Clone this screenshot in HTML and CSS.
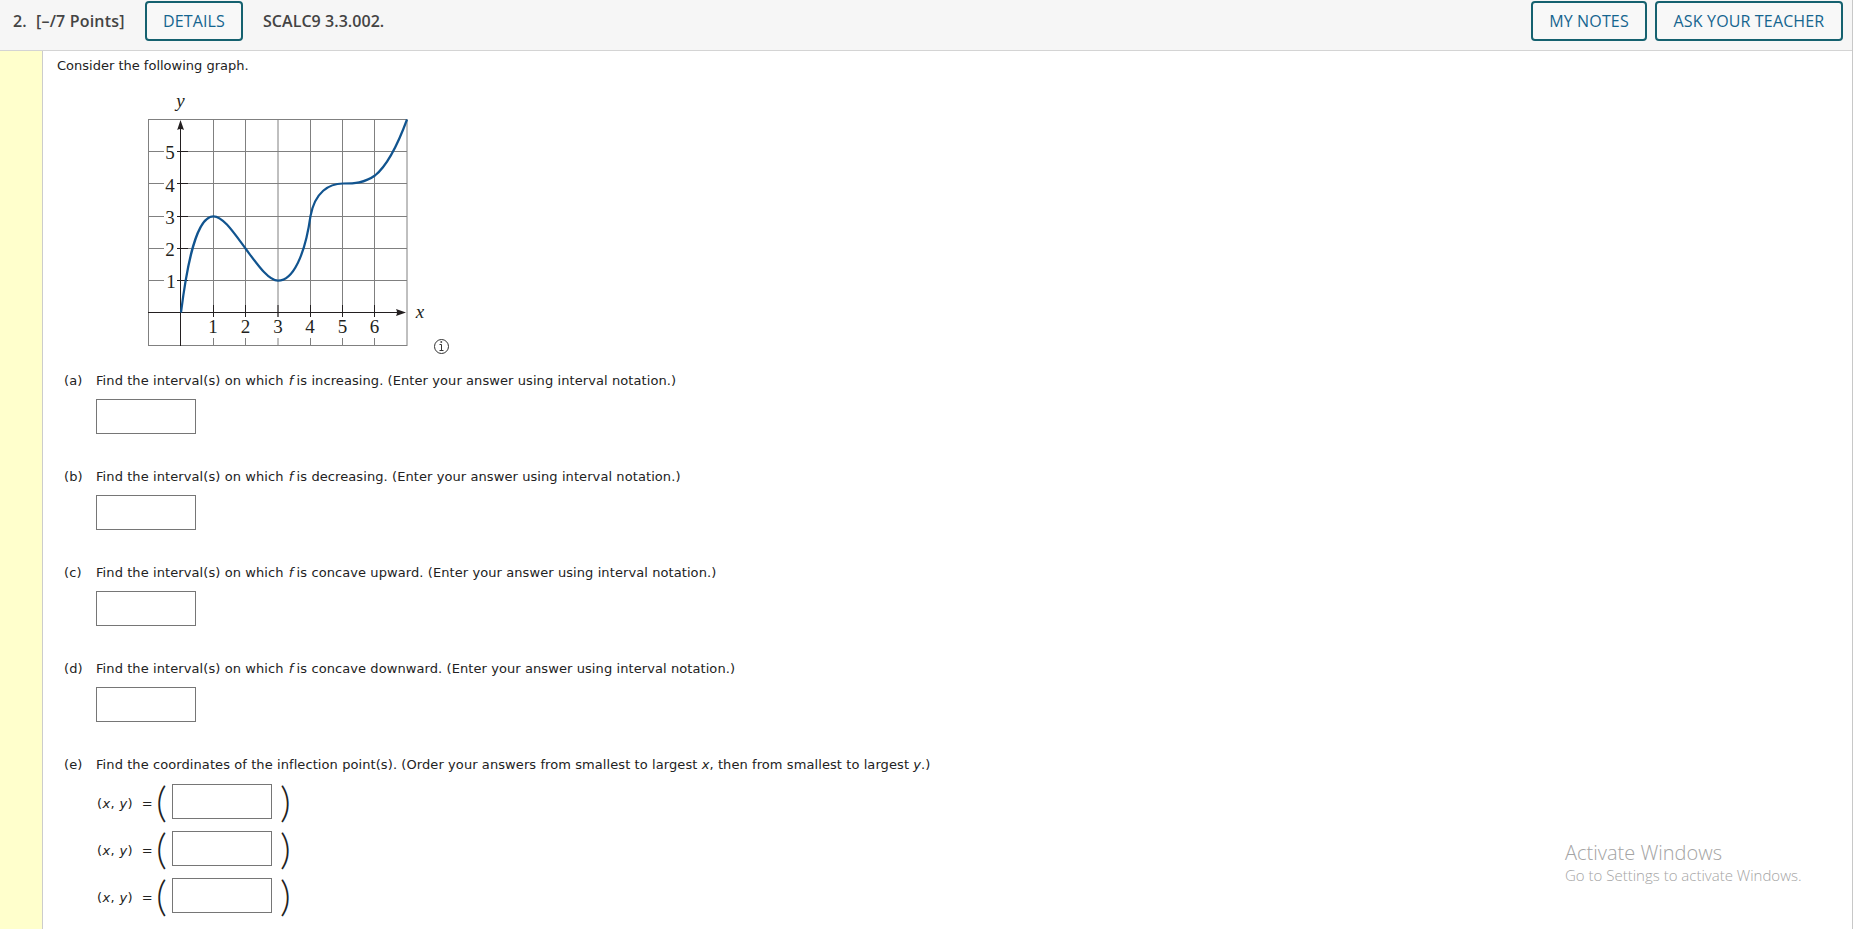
FILE: index.html
```html
<!DOCTYPE html>
<html lang="en">

<head>
	<meta charset="UTF-8">
	<title>SCALC9 3.3.002.</title>
	<link rel="stylesheet" href="styles.css">
</head>

<body>
	<div class="question">
		<header class="bar">
			<span class="number">2.</span>
			<span class="points">[–/7 Points]</span>
			<button type="button" class="butn details">DETAILS</button>
			<span class="source">SCALC9 3.3.002.</span>
			<button type="button" class="butn notes">MY NOTES</button>
			<button type="button" class="butn ask">ASK YOUR TEACHER</button>
		</header>

		<main class="content">
			<p class="intro">Consider the following graph.</p>

			<svg class="graph" width="340" height="280" viewBox="0 0 340 280">
				<!-- grid -->
				<g class="grid">
					<path d="M18.5 34.5H277M18.5 66.5H277M18.5 98.5H277M18.5 131.5H277M18.5 163.5H277M18.5 195.5H277M18.5 260.5H277" />
					<path d="M18.5 34V261M83.5 34V261M115.5 34V261M148 34V261M180.5 34V261M212.5 34V261M244.5 34V261M277 34V261" />
				</g>
				<!-- white space behind the numbers -->
				<g fill="#fff">
					<rect x="34" y="60" width="13" height="145" />
					<rect x="76" y="232" width="176" height="21" />
				</g>
				<!-- axes and ticks -->
				<g class="axis">
					<path d="M18 227.5H272M50.5 261V40" />
					<path d="M47 66.5H58M47 98.5H58M47 131.5H58M47 163.5H58M47 195.5H58" />
					<path d="M83.5 220V232M115.5 220V232M148 220V232M180.5 220V232M212.5 220V232M244.5 220V232" />
				</g>
				<path fill="#231f20" d="M50.5 35L54 45Q50.5 43 47.2 45ZM276 227.5L266 231Q268 227.5 266 224Z" />
				<path class="curve" d="M51 227.5C57 180 66 131.3 83.5 131.3C93 131.3 104 148 115.5 163.5C126 177.5 138 195.7 148 195.7C163 195.7 175 170 180.5 131C185 107 199 98.5 213 98.5C224 98.5 234.5 98 245 90.5C258 80 268 59 277 34.5" />
				<g class="nums">
					<text x="40" y="74">5</text>
					<text x="40" y="106.5">4</text>
					<text x="40" y="138.5">3</text>
					<text x="40" y="171">2</text>
					<text x="41" y="203">1</text>
					<text x="83" y="248">1</text>
					<text x="115.5" y="248">2</text>
					<text x="148" y="248">3</text>
					<text x="180" y="248">4</text>
					<text x="212.5" y="248">5</text>
					<text x="244.5" y="248">6</text>
					<text class="var" x="50.5" y="22">y</text>
					<text class="var" x="290" y="233">x</text>
				</g>
				<!-- info icon -->
				<g fill="none" stroke="#333">
					<circle cx="311.5" cy="261.5" r="7" />
					<path d="M309.5 259.5H311.5V265.5M309.5 265.5H313.5" />
					<path stroke-width="1.6" d="M311.3 256.2V257.8" />
				</g>
			</svg>

			<div class="part">
				<span>(a)</span>
				<div>
					<p>Find the interval(s) on which <i class="f">f</i> is increasing. (Enter your answer using interval notation.)</p>
					<input type="text" class="answer">
				</div>
			</div>
			<div class="part">
				<span>(b)</span>
				<div>
					<p>Find the interval(s) on which <i class="f">f</i> is decreasing. (Enter your answer using interval notation.)</p>
					<input type="text" class="answer">
				</div>
			</div>
			<div class="part">
				<span>(c)</span>
				<div>
					<p>Find the interval(s) on which <i class="f">f</i> is concave upward. (Enter your answer using interval notation.)</p>
					<input type="text" class="answer">
				</div>
			</div>
			<div class="part">
				<span>(d)</span>
				<div>
					<p>Find the interval(s) on which <i class="f">f</i> is concave downward. (Enter your answer using interval notation.)</p>
					<input type="text" class="answer">
				</div>
			</div>
			<div class="part">
				<span>(e)</span>
				<div>
					<p class="long">Find the coordinates of the inflection point(s). (Order your answers from smallest to largest <i>x</i>, then from smallest to largest <i>y</i>.)</p>
					<div class="point">
						<span class="xy">(<i>x</i>, <i>y</i>) &nbsp;=</span>
						<span class="paren">(</span>
						<input type="text" class="answer">
						<span class="paren right">)</span>
					</div>
					<div class="point">
						<span class="xy">(<i>x</i>, <i>y</i>) &nbsp;=</span>
						<span class="paren">(</span>
						<input type="text" class="answer">
						<span class="paren right">)</span>
					</div>
					<div class="point">
						<span class="xy">(<i>x</i>, <i>y</i>) &nbsp;=</span>
						<span class="paren">(</span>
						<input type="text" class="answer">
						<span class="paren right">)</span>
					</div>
				</div>
			</div>
		</main>
	</div>

	<div class="watermark">
		<div class="activate">Activate Windows</div>
		<div class="settings">Go to Settings to activate Windows.</div>
	</div>
</body>

</html>
```
FILE: styles.css
```css
* {
	box-sizing: border-box;
}

body {
	margin: 0;
	height: 929px;
	overflow: hidden;
	background: #fff;
	font-family: "DejaVu Sans", sans-serif;
	font-size: 13px;
	color: #222;
}

p {
	margin: 0;
}

.question {
	width: 1853px;
	height: 929px;
	display: flex;
	flex-direction: column;
	border-right: 1px solid #c8c8c8;
}

.bar {
	height: 51px;
	flex: none;
	display: flex;
	align-items: flex-start;
	padding: 1px 9px 0 13px;
	background: #f6f6f6;
	border-bottom: 1px solid #d4d4d4;
	font-family: "Open Sans", sans-serif;
	font-size: 16px;
	font-weight: 600;
	line-height: 40px;
	color: #444;
	white-space: nowrap;
}

.number {
	width: 23px;
}

.points {
	width: 109px;
	letter-spacing: 0.18px;
}

.source {
	letter-spacing: 0.05px;
}

.butn {
	height: 40px;
	padding: 0;
	border: 2px solid #15616f;
	border-radius: 4px;
	background: #f8f8f8;
	font-family: inherit;
	font-size: 16px;
	line-height: 34px;
	letter-spacing: 0.15px;
	color: #15658f;
}

.details {
	width: 98px;
	margin-right: 20px;
}

.notes {
	width: 116px;
	margin-left: auto;
	margin-right: 8px;
}

.ask {
	width: 188px;
}

.content {
	flex: 1;
	min-height: 0;
	padding: 5px 0 0 14px;
	border-left: 42px solid #ffffcc;
	box-shadow: inset 1px 0 #ccc;
}

.intro {
	height: 29px;
	padding-left: 1px;
	line-height: 20px;
}

.graph {
	display: block;
	margin-left: 74px;
}

.grid {
	fill: none;
	stroke: #808080;
}

.axis {
	fill: none;
	stroke: #231f20;
}

.curve {
	fill: none;
	stroke: #11548f;
	stroke-width: 2.2;
}

.nums {
	font-family: "Liberation Serif", serif;
	font-size: 19px;
	text-anchor: middle;
	fill: #231f20;
}

.var {
	font-style: italic;
}

.part {
	height: 96px;
	display: flex;
	padding: 6px 0 0 8px;
	line-height: 20px;
	letter-spacing: 0.085px;
	white-space: nowrap;
}

.part > span {
	width: 32px;
}

.f {
	margin: 0 -1px 0 1px;
}

.answer {
	display: block;
	width: 100px;
	height: 35px;
	margin: 8px 0 0;
	border: 1px solid #767676;
}

.point {
	height: 47px;
	display: flex;
	align-items: flex-start;
}

.long + .point {
	margin-top: 9px;
}

.point .answer {
	margin: 0;
}

.xy {
	width: 60px;
	padding: 10px 0 0 1px;
	letter-spacing: 0.35px;
}

.paren {
	width: 16px;
	font-family: Lato, sans-serif;
	font-weight: 300;
	font-size: 42px;
	line-height: 35px;
}

.right {
	padding-left: 8px;
}

/* sits over the page */
.watermark {
	position: absolute;
	left: 1565px;
	top: 840px;
	font-family: "Open Sans", sans-serif;
	font-weight: 300;
	color: #a4a4a4;
}

.activate {
	font-size: 20px;
	line-height: 26px;
}

.settings {
	font-size: 15px;
	line-height: 19px;
}
```
